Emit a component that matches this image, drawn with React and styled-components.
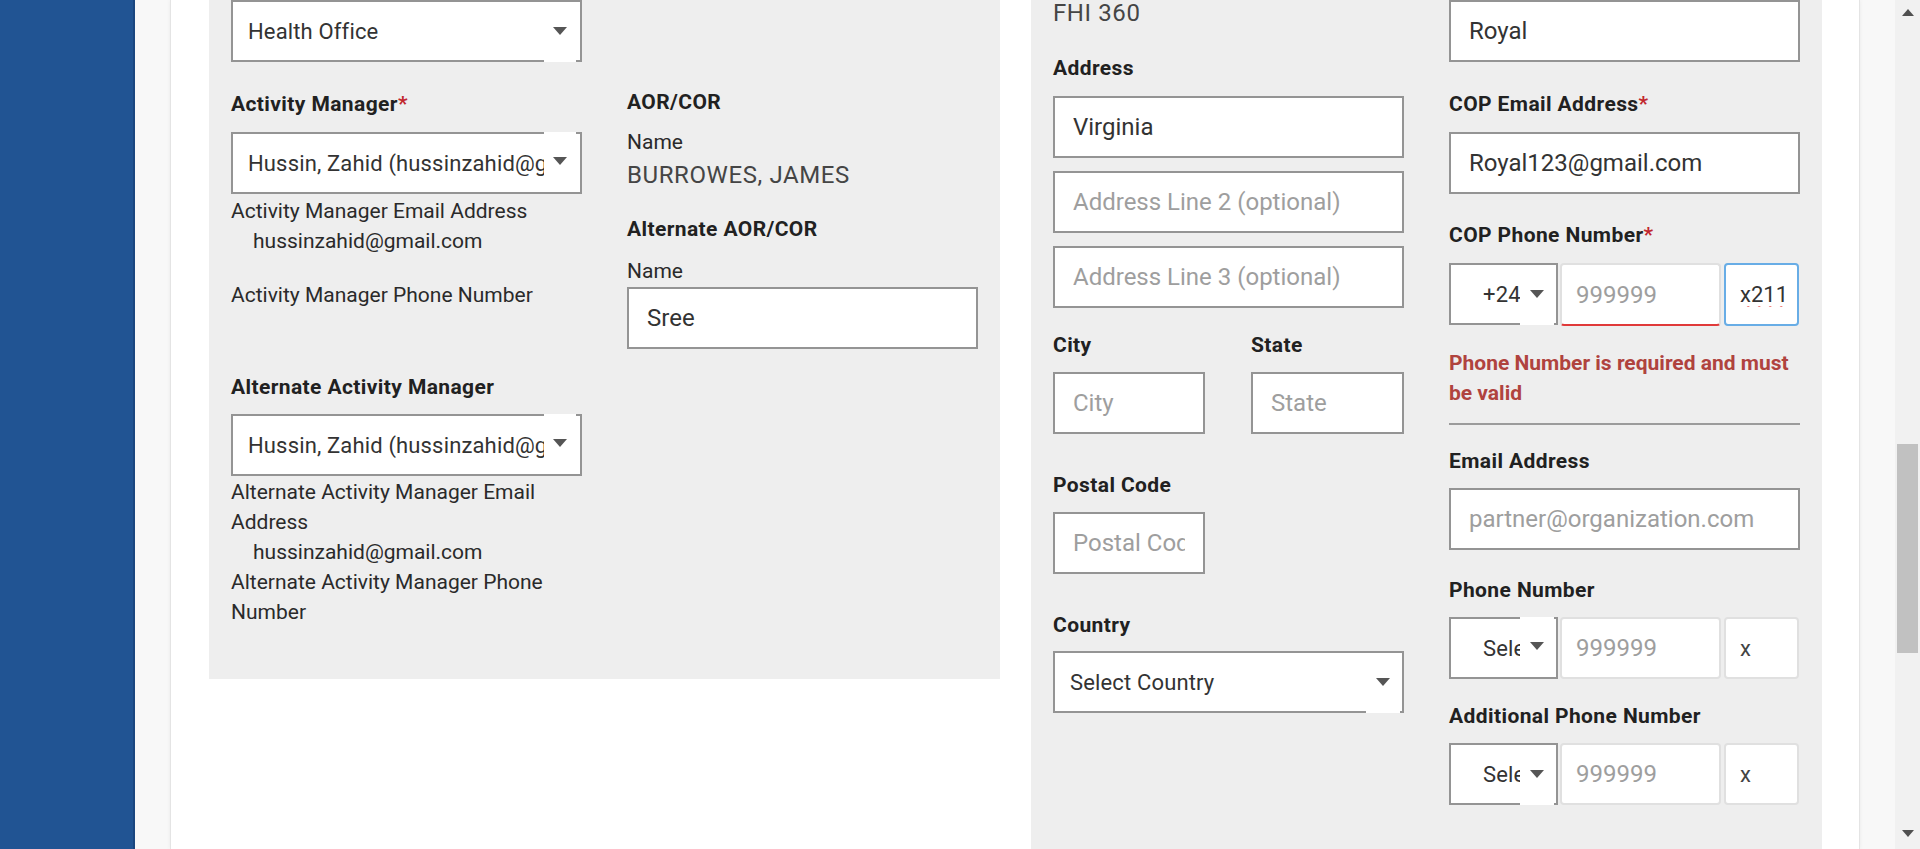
import React from 'react';
import styled, { createGlobalStyle } from 'styled-components';

const GlobalStyle = createGlobalStyle`
  * { box-sizing: border-box; }
  html, body { margin: 0; padding: 0; }
  body {
    font-family: Roboto, "Noto Sans", Arial, sans-serif;
    color: #222;
    background: #fff;
    overflow: hidden;
  }
`;

const Shell = styled.div`
  display: flex;
  height: 849px;
  overflow: hidden;
`;

const Sidebar = styled.aside`
  width: 135px;
  flex-shrink: 0;
  background: #215493;
  border-right: 2px solid #1a467f;
`;

const Gutter = styled.main`
  flex: 1;
  min-width: 0;
  display: flex;
  background: #f8f8f8;
  padding: 0 35px;
`;

const Page = styled.div`
  flex: 1;
  display: flex;
  align-items: flex-start;
  gap: 31px;
  background: #fff;
  border-left: 1px solid #e4e4e4;
  border-right: 1px solid #e4e4e4;
  box-shadow: 0 0 4px rgba(0, 0, 0, 0.06);
  padding: 0 37px 0 38px;
`;

const Panel = styled.section`
  width: 791px;
  flex-shrink: 0;
  align-self: ${p => (p.$fill ? 'stretch' : 'flex-start')};
  background: #eeeeee;
  padding: 0 22px ${p => p.$pb || 0}px;
  display: grid;
  grid-template-columns: 351px 351px;
  column-gap: 45px;
  align-items: start;
`;

const Column = styled.div`
  display: flex;
  flex-direction: column;
  min-width: 0;
`;

const Label = styled.div`
  margin-top: ${p => p.$mt || 0}px;
  font-size: 21px;
  font-weight: 700;
  line-height: 30px;
  letter-spacing: 0.4px;
  color: #212121;
  white-space: nowrap;
`;

const Star = styled.span`
  color: #c1272d;
`;

const Text = styled.div`
  margin-top: ${p => p.$mt || 0}px;
  padding-left: ${p => (p.$indent ? 22 : 0)}px;
  font-size: 21px;
  line-height: 30px;
  color: #2a2a2a;
`;

const Value = styled.div`
  margin-top: ${p => p.$mt || 0}px;
  font-size: 24px;
  line-height: ${p => p.$lh || 30}px;
  letter-spacing: 0.6px;
  color: #454545;
`;

const Input = styled.input`
  display: block;
  width: ${p => (p.$w ? `${p.$w}px` : '100%')};
  height: 62px;
  margin: ${p => p.$mt || 0}px 0 0;
  border: 2px solid #949494;
  border-radius: 0;
  padding: 0 18px;
  font-family: Roboto, sans-serif;
  font-size: 24px;
  color: #333;
  background: #fff;
  outline: none;

  &::placeholder {
    color: #9e9e9e;
    opacity: 1;
  }
`;

const SelectBox = styled.div`
  position: relative;
  display: flex;
  align-items: center;
  width: ${p => (p.$w ? `${p.$w}px` : '100%')};
  height: 62px;
  flex-shrink: 0;
  margin-top: ${p => p.$mt || 0}px;
  border: 2px solid #949494;
  background: #fff;
  padding: 0 6px 0 ${p => p.$pl || 15}px;
  font-size: 22px;
  letter-spacing: 0.15px;
  color: #333;
`;

const SelectText = styled.span`
  flex: 1;
  overflow: hidden;
  white-space: nowrap;
`;

const ArrowCap = styled.span`
  position: absolute;
  right: ${p => p.$right || 4}px;
  ${p => (p.$edge === 'top' ? 'top: -2px;' : 'bottom: -2px;')}
  width: ${p => p.$w || 32}px;
  height: 60px;
  background: #fff;
  display: flex;
  align-items: center;
  justify-content: center;
  padding-bottom: 3px;
`;

const Caret = () => (
  <svg width="14" height="8" viewBox="0 0 14 8">
    <path d="M0 0 H14 L7 8 Z" fill="#555" />
  </svg>
);

const Select = ({ children, edge = 'bottom', w, pl, capW, capRight, mt }) => (
  <SelectBox $w={w} $pl={pl} $mt={mt}>
    <SelectText>{children}</SelectText>
    <ArrowCap $edge={edge} $w={capW} $right={capRight}>
      <Caret />
    </ArrowCap>
  </SelectBox>
);

const Pair = styled.div`
  display: grid;
  grid-template-columns: 152px 153px;
  column-gap: 46px;
  margin-top: ${p => p.$mt || 0}px;
`;

const PhoneRow = styled.div`
  display: flex;
  height: ${p => p.$h || 62}px;
  margin-top: ${p => p.$mt || 0}px;
`;

const NumberInput = styled.input`
  width: 161px;
  height: 100%;
  margin: 0 0 0 2px;
  border: 2px solid #e0e0e0;
  border-bottom-color: ${p => (p.$invalid ? '#e03a3a' : '#e0e0e0')};
  border-radius: 4px;
  padding: 0 14px;
  font-family: Roboto, sans-serif;
  font-size: 24px;
  color: #333;
  background: #fff;
  outline: none;

  &::placeholder {
    color: #9e9e9e;
    opacity: 1;
  }
`;

const ExtInput = styled.input`
  width: 75px;
  height: 100%;
  margin: 0 0 0 3px;
  border: 2px solid ${p => (p.$focus ? '#68ade6' : '#e0e0e0')};
  border-radius: 4px;
  padding: 0 2px 0 14px;
  font-family: Roboto, sans-serif;
  font-size: 22px;
  color: #333;
  background: #fff;
  outline: none;
  text-decoration: ${p => (p.$misspelled ? 'underline wavy #e53935' : 'none')};
  text-decoration-thickness: 1.5px;
  text-underline-offset: 4px;

  &::placeholder {
    color: #444;
    opacity: 1;
  }
`;

const Phone = ({ code, invalid, focus, ext, mt, h, edge }) => (
  <PhoneRow $mt={mt} $h={h}>
    <Select w={109} pl={32} capW={34} capRight={2} edge={edge}>
      {code}
    </Select>
    <NumberInput placeholder="999999" $invalid={invalid} readOnly />
    <ExtInput
      placeholder="x"
      defaultValue={ext}
      $focus={focus}
      $misspelled={!!ext}
      readOnly
    />
  </PhoneRow>
);

const ErrorText = styled.div`
  margin-top: ${p => p.$mt || 0}px;
  font-size: 21px;
  font-weight: 700;
  line-height: 30px;
  color: #b0433e;
`;

const Rule = styled.div`
  margin-top: ${p => p.$mt || 0}px;
  height: 2px;
  background: #9b9b9b;
`;

const Track = styled.div`
  width: 25px;
  flex-shrink: 0;
  display: flex;
  flex-direction: column;
  align-items: center;
  background: #f1f1f1;
`;

const TrackButton = styled.div`
  height: 26px;
  width: 100%;
  display: flex;
  justify-content: center;
  align-items: ${p => (p.$down ? 'flex-start' : 'flex-end')};
  padding: ${p => (p.$down ? '7px 0 0' : '0 0 10px')};
`;

const TrackBody = styled.div`
  flex: 1;
  width: 100%;
  display: flex;
  flex-direction: column;
  align-items: center;
`;

const Thumb = styled.div`
  width: 21px;
  background: #c1c1c1;
`;

const ScrollBar = ({ ratio, visible }) => {
  const body = 849 - 52;
  const thumb = Math.round(body * visible);
  const top = Math.round((body - thumb) * ratio);
  return (
    <Track>
      <TrackButton>
        <svg width="12" height="7" viewBox="0 0 12 7">
          <path d="M0 7 L6 0 L12 7 Z" fill="#505050" />
        </svg>
      </TrackButton>
      <TrackBody>
        <Thumb style={{ marginTop: top, height: thumb }} />
      </TrackBody>
      <TrackButton $down>
        <svg width="12" height="7" viewBox="0 0 12 7">
          <path d="M0 0 H12 L6 7 Z" fill="#505050" />
        </svg>
      </TrackButton>
    </Track>
  );
};

const App = () => (
  <>
    <GlobalStyle />
    <Shell>
      <Sidebar />
      <Gutter>
        <Page>
          <Panel $pb={52}>
            <Column>
              <Select edge="bottom">Health Office</Select>
              <Label $mt={27}>
                Activity Manager<Star>*</Star>
              </Label>
              <Select edge="top" mt={13}>
                Hussin, Zahid (hussinzahid@gmail.com)
              </Select>
              <Text $mt={2}>Activity Manager Email Address</Text>
              <Text $indent>hussinzahid@gmail.com</Text>
              <Text $mt={24}>Activity Manager Phone Number</Text>
              <Label $mt={62}>Alternate Activity Manager</Label>
              <Select edge="top" mt={12}>
                Hussin, Zahid (hussinzahid@gmail.com)
              </Select>
              <Text $mt={1}>Alternate Activity Manager Email Address</Text>
              <Text $indent>hussinzahid@gmail.com</Text>
              <Text>Alternate Activity Manager Phone Number</Text>
            </Column>
            <Column>
              <Label $mt={87}>AOR/COR</Label>
              <Text $mt={10}>Name</Text>
              <Value $mt={3}>BURROWES, JAMES</Value>
              <Label $mt={24}>Alternate AOR/COR</Label>
              <Text $mt={12}>Name</Text>
              <Input $mt={1} defaultValue="Sree" readOnly />
            </Column>
          </Panel>

          <Panel $fill>
            <Column>
              <Value $lh={26}>FHI 360</Value>
              <Label $mt={27}>Address</Label>
              <Input $mt={13} defaultValue="Virginia" readOnly />
              <Input $mt={13} placeholder="Address Line 2 (optional)" readOnly />
              <Input $mt={13} placeholder="Address Line 3 (optional)" readOnly />
              <Pair $mt={22}>
                <Label>City</Label>
                <Label>State</Label>
              </Pair>
              <Pair $mt={12}>
                <Input placeholder="City" readOnly />
                <Input placeholder="State" readOnly />
              </Pair>
              <Label $mt={36}>Postal Code</Label>
              <Input $mt={12} $w={152} placeholder="Postal Code" readOnly />
              <Label $mt={36}>Country</Label>
              <Select edge="bottom" mt={11} capW={34} capRight={2}>
                Select Country
              </Select>
            </Column>
            <Column>
              <Input defaultValue="Royal" readOnly />
              <Label $mt={27}>
                COP Email Address<Star>*</Star>
              </Label>
              <Input $mt={13} defaultValue="Royal123@gmail.com" readOnly />
              <Label $mt={26}>
                COP Phone Number<Star>*</Star>
              </Label>
              <Phone mt={13} h={63} code="+24" invalid focus ext="x211" edge="bottom" />
              <ErrorText $mt={22}>Phone Number is required and must be valid</ErrorText>
              <Rule $mt={15} />
              <Label $mt={21}>Email Address</Label>
              <Input $mt={12} placeholder="partner@organization.com" readOnly />
              <Label $mt={25}>Phone Number</Label>
              <Phone mt={12} code="Select" edge="top" />
              <Label $mt={22}>Additional Phone Number</Label>
              <Phone mt={12} code="Select" edge="bottom" />
            </Column>
          </Panel>
        </Page>
      </Gutter>
      <ScrollBar ratio={0.711} visible={0.262} />
    </Shell>
  </>
);

export default App;
